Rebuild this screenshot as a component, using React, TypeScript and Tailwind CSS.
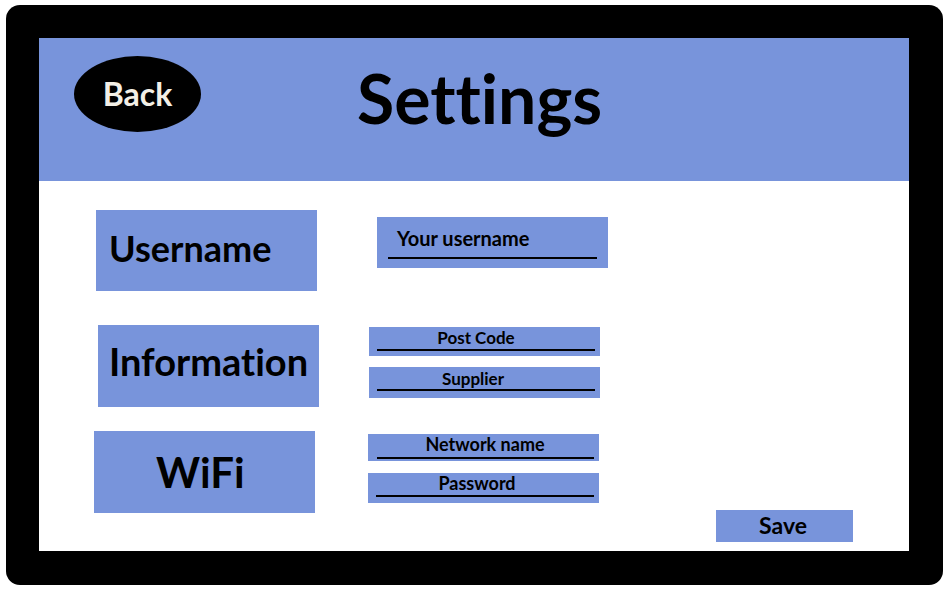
import React from "react";

const font = { fontFamily: "Lato, 'Open Sans', sans-serif" };

function Field({
  label,
  h,
  pt,
  ul,
  ulMl,
  ulMr,
  shift,
  size,
}: {
  label: string;
  h: string;
  pt: string;
  ul: string;
  ulMl: string;
  ulMr: string;
  shift: string;
  size: string;
}) {
  return (
    <div className={`w-[231px] ${h} bg-[#7894db] flex flex-col`}>
      <div className={`${pt} ${shift} ${size} leading-none font-bold text-black text-center`}>{label}</div>
      <div className={`${ul} ${ulMl} ${ulMr} h-[2px] bg-black`} />
    </div>
  );
}

export default function App() {
  return (
    <div className="w-[948px] h-[591px] bg-white pt-[5px] pl-[6px] [font-variant-ligatures:none]" style={font}>
      <div className="w-[937px] h-[580px] bg-black rounded-[14px] pt-[33px] pl-[33px] pr-[34px] pb-[34px]">
        <div className="w-[870px] h-[513px] bg-white flex flex-col">
          {/* Header */}
          <div className="h-[143px] bg-[#7894db] flex items-start pl-[35px] pt-[18px]">
            <div className="w-[127px] h-[76px] rounded-[50%] bg-black flex items-center justify-center">
              <span className="text-[32px] leading-none font-bold text-[#f3efe6]">Back</span>
            </div>
            <div className="ml-[156px] mt-[8px] text-[68px] leading-none font-bold text-black">Settings</div>
          </div>

          {/* Body */}
          <div className="flex flex-col pt-[29px]">
            {/* Row 1 */}
            <div className="flex items-start pl-[57px]">
              <div className="w-[221px] h-[81px] bg-[#7894db] pl-[13px] pt-[20px] text-[36px] leading-none font-bold text-black">
                Username
              </div>
              <div className="ml-[60px] mt-[7px] w-[231px] h-[51px] bg-[#7894db] flex flex-col">
                <div className="pt-[11px] pl-[20px] text-[20px] leading-none font-bold text-black">Your username</div>
                <div className="mt-[9px] ml-[11px] mr-[11px] h-[2px] bg-black" />
              </div>
            </div>

            {/* Row 2 */}
            <div className="flex items-start pl-[59px] mt-[34px]">
              <div className="w-[221px] h-[82px] bg-[#7894db] pl-[11px] pt-[17px] text-[38px] leading-none font-bold text-black">
                Information
              </div>
              <div className="ml-[50px] mt-[2px] flex flex-col gap-[11px]">
                <Field label="Post Code" size="text-[17px]" shift="pr-[17px]" h="h-[29px]" pt="pt-[2px]" ul="mt-[3px]" ulMl="ml-[8px]" ulMr="mr-[5px]" />
                <Field label="Supplier" size="text-[17px]" shift="pr-[23px]" h="h-[31px]" pt="pt-[3px]" ul="mt-[2px]" ulMl="ml-[8px]" ulMr="mr-[5px]" />
              </div>
            </div>

            {/* Row 3 */}
            <div className="flex items-start pl-[55px] mt-[24px]">
              <div className="w-[221px] h-[82px] bg-[#7894db] pl-[62px] pt-[20px] text-[42px] leading-none font-bold text-black">
                WiFi
              </div>
              <div className="ml-[53px] mt-[3px] flex flex-col gap-[12px]">
                <Field label="Network name" size="text-[18px]" shift="pl-[3px]" h="h-[27px]" pt="pt-[1px]" ul="mt-[4px]" ulMl="ml-[9px]" ulMr="mr-[5px]" />
                <Field label="Password" size="text-[18px]" shift="pr-[13px]" h="h-[30px]" pt="pt-[1px]" ul="mt-[3px]" ulMl="ml-[8px]" ulMr="mr-[5px]" />
              </div>
              <div className="ml-[117px] mt-[79px] w-[137px] h-[32px] bg-[#7894db] pt-[4px] pr-[3px] text-center text-[23px] leading-none font-bold text-black">
                Save
              </div>
            </div>
          </div>
        </div>
      </div>
    </div>
  );
}
